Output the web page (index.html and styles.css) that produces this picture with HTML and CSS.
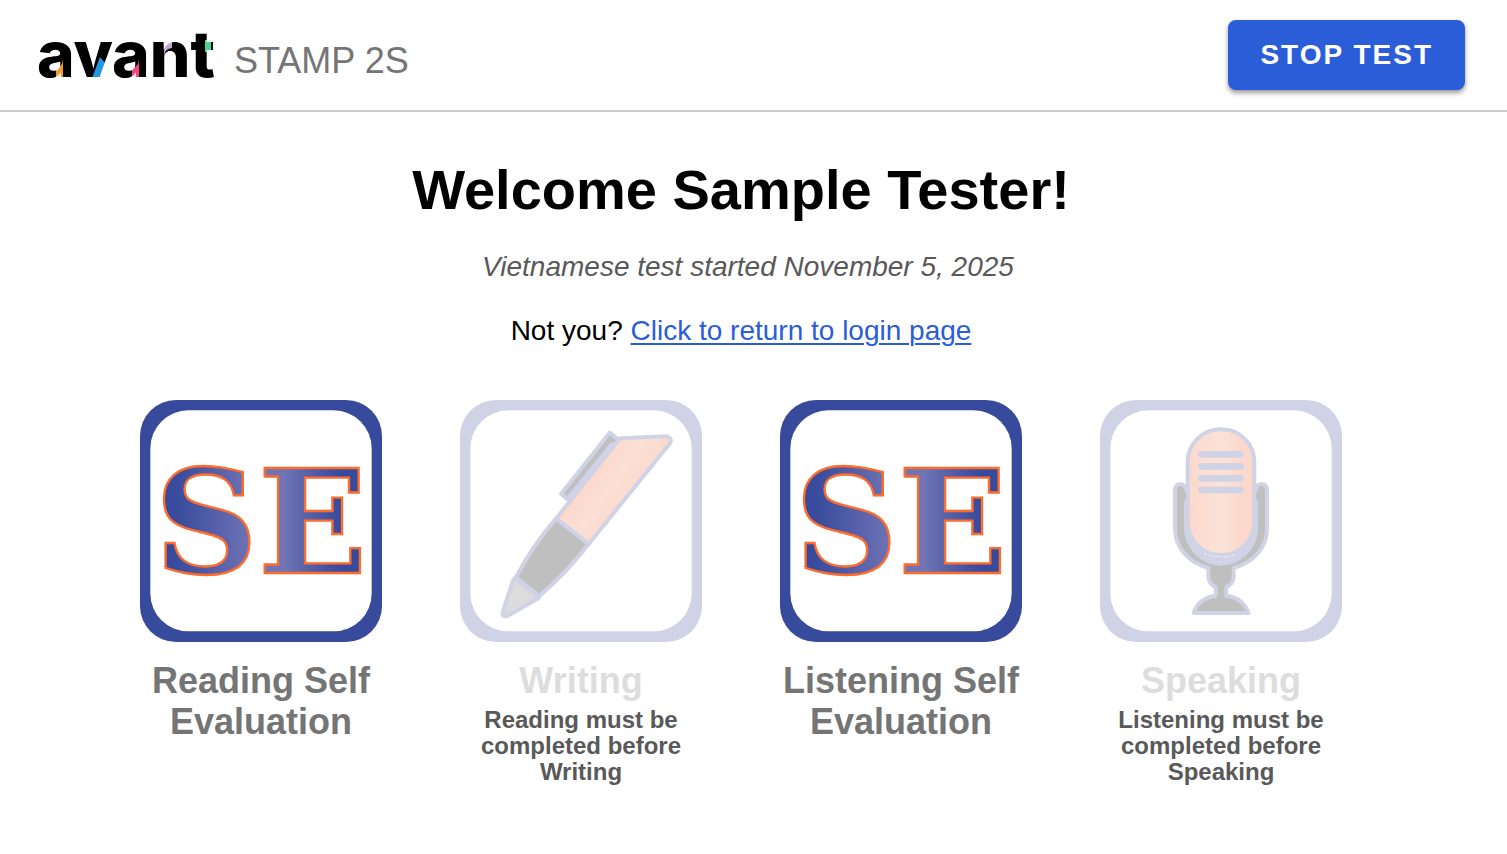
FILE: index.html
```html
<!DOCTYPE html>
<html lang="en">
<head>
	<meta charset="UTF-8">
	<meta name="viewport" content="width=device-width, initial-scale=1">
	<title>Avant STAMP 2S</title>
	<link rel="stylesheet" href="styles.css">
</head>
<body>
<header class="topbar">
	<div class="brand">
		<svg class="logo" viewBox="0 0 184 70" role="img" aria-label="avant">
			<defs>
				<pattern id="logoFill" patternUnits="userSpaceOnUse" width="200" height="80">
					<rect width="200" height="80" fill="#000"/>
					<path d="M18 60V49Q25 46 25 39V60z" fill="#f4982f"/>
					<path d="M54 58L62 37L67 43L61 58z" fill="#2299df"/>
					<path d="M94 60V49Q101 46 101 39V60z" fill="#f5447d"/>
					<path d="M126 35V20H134V28Q127 29 126 35z" fill="#c2abd9"/>
					<rect x="167" y="20" width="6" height="12" fill="#45d58e"/>
				</pattern>
			</defs>
			<text class="logo-text" x="-1" y="57" fill="url(#logoFill)">avant</text>
		</svg>
		<span class="product">STAMP 2S</span>
	</div>
	<button type="button" class="stop">STOP TEST</button>
</header>

<main class="content">
	<h1 class="welcome">Welcome Sample Tester!</h1>
	<p class="started">Vietnamese test started November 5, 2025</p>
	<p class="notyou">Not you? <a href="#login">Click to return to login page</a></p>

	<div class="sections">
		<button type="button" class="section">
			<svg class="icon" viewBox="30 30 726 726" aria-hidden="true">
				<defs>
					<linearGradient id="seFill" gradientUnits="userSpaceOnUse" x1="100" y1="0" x2="700" y2="0">
						<stop offset="0.05" stop-color="#374a9c"/>
						<stop offset="0.45" stop-color="#7074b5"/>
						<stop offset="0.6" stop-color="#7074b5"/>
						<stop offset="0.88" stop-color="#374a9c"/>
					</linearGradient>
				</defs>
				<rect class="frame" x="30" y="30" width="726" height="726" rx="108"/>
				<rect x="61" y="61" width="664" height="663" rx="114" fill="#fff"/>
				<text class="se" x="393" y="549" fill="url(#seFill)">SE</text>
			</svg>
			<span class="name">Reading Self Evaluation</span>
		</button>

		<button type="button" class="section" disabled>
			<svg class="icon" viewBox="30 30 726 726" aria-hidden="true">
				<defs>
					<linearGradient id="penFill" gradientUnits="userSpaceOnUse" x1="420" y1="260" x2="540" y2="345">
						<stop offset="0" stop-color="#fcd8cc"/>
						<stop offset="0.45" stop-color="#fbe0d6"/>
						<stop offset="1" stop-color="#fcd8cc"/>
					</linearGradient>
				</defs>
				<rect class="frame" x="30" y="30" width="726" height="726" rx="108"/>
				<rect x="61" y="61" width="664" height="663" rx="114" fill="#fff"/>
				<g class="line">
					<path fill="#bfbfbf" d="M479 128L333 312L352 327L485 163L497 172L508 151z"/>
					<path fill="url(#penFill)" d="M510 145L650 139Q668 144 660 160L416 462L318 386z"/>
					<path fill="#bfbfbf" d="M318 386L416 462Q350 548 268 618L198 562Q245 470 318 386z"/>
					<path fill="#dcdcdc" d="M194 565L268 622L260 628L170 679Q156 680 158 667L188 574z"/>
				</g>
			</svg>
			<span class="name">Writing</span>
			<span class="note">Reading must be completed before Writing</span>
		</button>

		<button type="button" class="section">
			<svg class="icon" viewBox="30 30 726 726" aria-hidden="true">
				<rect class="frame" x="30" y="30" width="726" height="726" rx="108"/>
				<rect x="61" y="61" width="664" height="663" rx="114" fill="#fff"/>
				<text class="se" x="393" y="549" fill="url(#seFill)">SE</text>
			</svg>
			<span class="name">Listening Self Evaluation</span>
		</button>

		<button type="button" class="section" disabled>
			<svg class="icon" viewBox="30 30 726 726" aria-hidden="true">
				<defs>
					<linearGradient id="micFill">
						<stop offset="0" stop-color="#fcd8cc"/>
						<stop offset="0.5" stop-color="#fbe2d8"/>
						<stop offset="0.8" stop-color="#fcd8cc"/>
					</linearGradient>
				</defs>
				<rect class="frame" x="30" y="30" width="726" height="726" rx="108"/>
				<rect x="61" y="61" width="664" height="663" rx="114" fill="#fff"/>
				<g class="line">
					<path fill="#bfbfbf" d="M255 298Q257 282 271 282Q285 282 288 297Q296 308 296 320Q296 330 288 337V415C288 470 335 521 393 521S498 470 498 415V337Q490 330 490 320Q490 308 498 297Q501 282 515 282Q529 282 531 298V415C531 475 490 517 431 534V560Q431 580 409 591V617Q460 624 475 669H311Q326 624 377 617V591Q355 580 355 560V534C296 517 255 475 255 415z"/>
					<path fill="#d0d3e6" stroke="none" d="M288 337V415C288 470 335 515 393 515S498 470 498 415V337z"/>
					<rect x="293" y="118" width="200" height="377" rx="98" fill="url(#micFill)"/>
				</g>
				<path d="M343 491Q393 510 437 493" fill="none" stroke="#fff" stroke-width="2" stroke-dasharray="8 4"/>
				<path d="M334 193H452M334 229H452M334 265H452M334 300H452" fill="none" stroke="#d0d3e6" stroke-width="20" stroke-linecap="round"/>
			</svg>
			<span class="name">Speaking</span>
			<span class="note">Listening must be completed before Speaking</span>
		</button>
	</div>
</main>
</body>
</html>
```

FILE: styles.css
```css
* {
	box-sizing: border-box;
}
body {
	margin: 0;
	background: #fff;
	color: #000;
	font-family: "Liberation Sans", Arial, Helvetica, sans-serif;
	font-size: 28px;
	line-height: 32px;
}
.topbar {
	display: flex;
	align-items: center;
	justify-content: space-between;
	padding: 20px 42px 20px 38px;
	border-bottom: 2px solid #ccc;
}
.brand {
	display: flex;
	align-items: center;
	gap: 12px;
}
.logo {
	display: block;
	width: 184px;
	height: 70px;
	overflow: visible;
}
.logo-text {
	font-family: Inter, sans-serif;
	font-size: 64px;
	font-weight: 800;
}
.product {
	padding-top: 12px;
	color: #757575;
	font-size: 36px;
	line-height: 40px;
}
.stop {
	height: 70px;
	padding: 0 32px;
	border: 0;
	border-radius: 8px;
	background: #2b5dd8;
	box-shadow: 0 3px 5px rgba(0, 0, 0, 0.4);
	color: #fff;
	font-family: inherit;
	font-size: 28px;
	font-weight: bold;
	letter-spacing: 2px;
	cursor: pointer;
}
.content {
	padding: 45px 25px 44px 0;
	text-align: center;
}
.welcome {
	margin: 0;
	font-size: 56px;
	line-height: 66px;
}
.started {
	margin: 28px 0 32px;
	padding-left: 14px;
	color: #595959;
	font-style: italic;
}
.notyou {
	margin: 0;
}
.notyou a {
	color: #2b5dd8;
	text-underline-offset: 3px;
	text-decoration-thickness: 2px;
}
.sections {
	display: flex;
	flex-wrap: wrap;
	justify-content: center;
	align-items: flex-start;
	gap: 32px 78px;
	margin-top: 53px;
}
.section {
	display: flex;
	flex-direction: column;
	align-items: center;
	width: 242px;
	padding: 0;
	border: 0;
	background: none;
	color: #757575;
	font-family: inherit;
	font-weight: bold;
	cursor: pointer;
}
.section:disabled {
	cursor: default;
}
.icon {
	display: block;
	width: 242px;
	height: 242px;
}
.frame {
	fill: #374a9c;
}
.section:disabled .frame {
	fill: #d0d3e6;
}
.line {
	stroke: #d0d3e6;
	stroke-width: 12;
	stroke-linejoin: round;
}
.se {
	font-family: "DejaVu Serif", serif;
	font-size: 430px;
	font-weight: bold;
	text-anchor: middle;
	stroke: #ff6b2c;
	stroke-width: 7;
}
.name {
	margin-top: 18px;
	font-size: 36px;
	line-height: 41px;
}
.section:disabled .name {
	color: #ddd;
}
.note {
	width: 210px;
	margin-top: 6px;
	color: #595959;
	font-size: 24px;
	line-height: 26px;
}
```
